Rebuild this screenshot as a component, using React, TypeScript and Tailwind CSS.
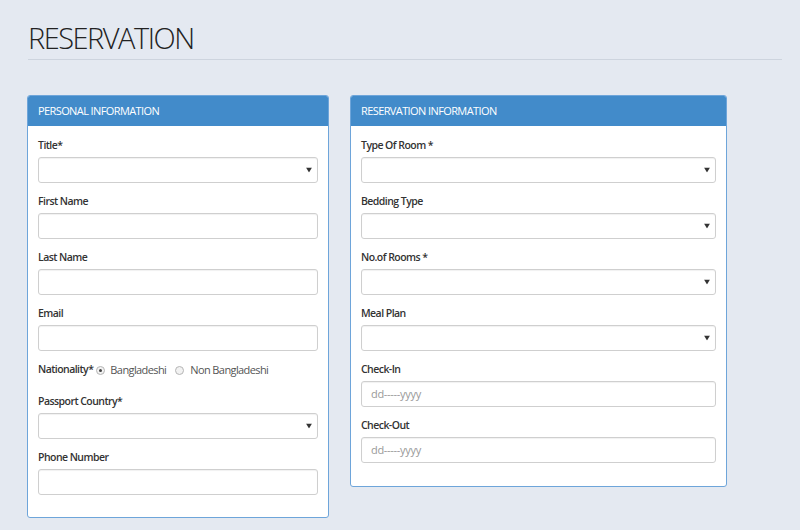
import React from "react";

const Arrow = () => (
    <svg className="absolute right-[5px] top-1/2 -translate-y-1/2" width="6" height="5" viewBox="0 0 6 5">
        <path d="M0 0 L6 0 L3 5 Z" fill="#333" />
    </svg>
);

const Label = ({ children }: { children: React.ReactNode }) => (
    <label className="block h-4 mb-1 text-[10.5px] leading-4 font-semibold tracking-[-0.55px] text-[#333]">{children}</label>
);

const SelectField = ({ label }: { label: string }) => (
    <div className="mb-[10px] last:mb-0">
        <Label>{label}</Label>
        <div className="relative h-[26px] rounded-[3px] border border-[#cfcfcf] bg-white shadow-[inset_0_1px_1px_rgba(0,0,0,0.06)]">
            <Arrow />
        </div>
    </div>
);

const TextField = ({ label, placeholder }: { label: string; placeholder?: string }) => (
    <div className="mb-[10px] last:mb-0">
        <Label>{label}</Label>
        <div className="h-[26px] rounded-[3px] border border-[#cfcfcf] bg-white px-[9px] text-[11px] leading-[24px] tracking-[-0.3px] text-[#999] shadow-[inset_0_1px_1px_rgba(0,0,0,0.06)]">
            {placeholder}
        </div>
    </div>
);

const Radio = ({ checked }: { checked?: boolean }) => (
    <span className="inline-flex items-center justify-center w-[9px] h-[9px] rounded-full border border-[#b5b5b5] bg-[#f2f2f2]">
        {checked && <span className="w-[3px] h-[3px] rounded-full bg-[#444]"></span>}
    </span>
);

const Panel = ({ title, width, children }: { title: string; width: string; children: React.ReactNode }) => (
    <div className={`${width} rounded-[3px] border border-[#6ea5da] bg-white overflow-hidden`}>
        <div className="h-[30px] bg-[#428bca] px-[10px] text-[11px] leading-[30px] tracking-[-0.6px] text-white">{title}</div>
        <div className="px-[10px] pt-[11px]">{children}</div>
    </div>
);

export default function App() {
    return (
        <div className="min-h-[530px] bg-[#e4e9f1] pl-[28px] pr-[18px]" style={{ fontFamily: '"Open Sans", "Liberation Sans", sans-serif' }}>
            <h1 className="pt-[20px] pb-[4px] border-b border-[#cdd4de] text-[29px] leading-[35px] font-light tracking-[-1.5px] text-[#222]">
                RESERVATION
            </h1>

            <div className="mt-[35px] flex items-start gap-[21px] -ml-px">
                <Panel title="PERSONAL INFORMATION" width="w-[302px]">
                    <div className="pb-[22px]">
                        <SelectField label="Title*" />
                        <TextField label="First Name" />
                        <TextField label="Last Name" />
                        <TextField label="Email" />
                        <div className="mt-[10px] mb-[14px] h-[18px] flex items-center text-[11px] tracking-[-0.6px] text-[#555]">
                            <span className="text-[10.5px] font-semibold tracking-[-0.55px] text-[#333] mr-[3px]">Nationality*</span>
                            <Radio checked />
                            <span className="ml-[5px] mr-[9px]">Bangladeshi</span>
                            <Radio />
                            <span className="ml-[6px]">Non Bangladeshi</span>
                        </div>
                        <SelectField label="Passport Country*" />
                        <TextField label="Phone Number" />
                    </div>
                </Panel>

                <Panel title="RESERVATION INFORMATION" width="w-[377px]">
                    <div className="pb-[23px]">
                        <SelectField label="Type Of Room *" />
                        <SelectField label="Bedding Type" />
                        <SelectField label="No.of Rooms *" />
                        <SelectField label="Meal Plan" />
                        <TextField label="Check-In" placeholder="dd-----yyyy" />
                        <TextField label="Check-Out" placeholder="dd-----yyyy" />
                    </div>
                </Panel>
            </div>
        </div>
    );
}
